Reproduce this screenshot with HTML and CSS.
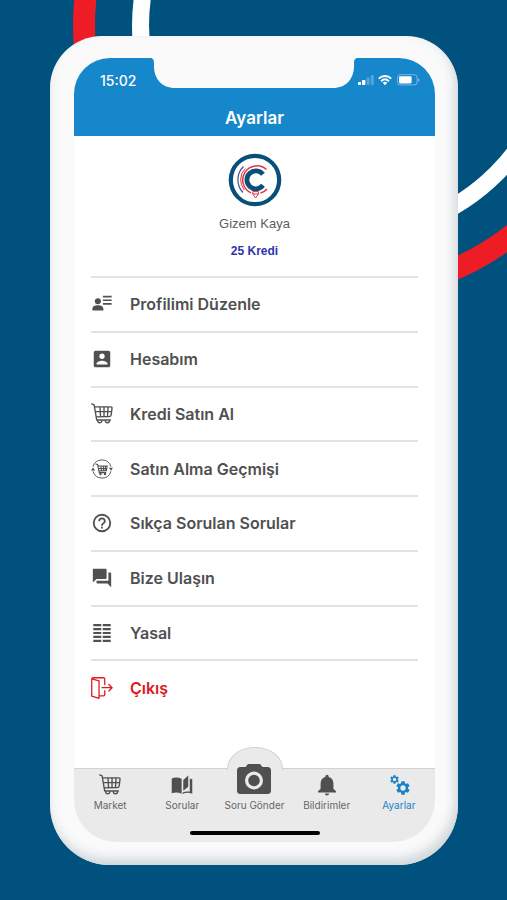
FILE: index.html
```html
<!DOCTYPE html>
<html lang="tr">
<head>
<meta charset="utf-8">
<meta name="viewport" content="width=device-width, initial-scale=1">
<title>Ayarlar</title>
<link rel="stylesheet" href="styles.css">
</head>
<body>
<svg class="rings" aria-hidden="true">
  <circle cx="349" cy="26" r="265" fill="none" stroke="#ee1c25" stroke-width="22"/>
  <circle cx="349" cy="26" r="208.5" fill="none" stroke="#fff" stroke-width="17"/>
</svg>

<svg class="defs" aria-hidden="true">
  <symbol id="cart" viewBox="0 0 24 24">
    <g fill="none" stroke="currentColor" stroke-width="1.5" stroke-linecap="round" stroke-linejoin="round">
      <path d="M.8 1l2.600 1 2.800 16.500h15M3.900 4.200h17.500q1.700 0 1.500 1.700l-.9 7.200q-.2 1.500-1.700 1.600L5.600 15.200M4.800 9.400h17.600M9.800 4.400l.6 10.400M14.200 4.400v10.400M18.600 4.400l-.6 10.200"/>
      <path d="M7.200 19.300a2.300 2.300 0 1 0 4.600 0M15.600 19.300a2.300 2.300 0 1 0 4.600 0"/>
    </g>
  </symbol>
  <symbol id="gear" viewBox="2 2 20 20">
    <path fill="currentColor" d="M19.14 12.94c.04-.3.06-.61.06-.94 0-.32-.02-.64-.07-.94l2.03-1.58c.18-.14.23-.41.12-.61l-1.92-3.32c-.12-.22-.37-.29-.59-.22l-2.39.96c-.5-.38-1.03-.7-1.62-.94l-.36-2.54c-.04-.24-.24-.41-.48-.41h-3.84c-.24 0-.43.17-.47.41l-.36 2.54c-.59.24-1.13.57-1.62.94l-2.39-.96c-.22-.08-.47 0-.59.22L2.74 8.870c-.12.21-.08.47.12.61l2.03 1.58c-.05.3-.09.63-.09.94s.02.64.07.94l-2.03 1.58c-.18.14-.23.41-.12.61l1.92 3.32c.12.22.37.29.59.22l2.39-.96c.5.38 1.03.7 1.62.94l.36 2.54c.05.24.24.41.48.41h3.84c.24 0 .44-.17.47-.41l.36-2.54c.59-.24 1.13-.56 1.62-.94l2.39.96c.22.08.47 0 .59-.22l1.92-3.32c.12-.22.07-.47-.12-.61l-2.01-1.58zM12 15.800a3.800 3.800 0 1 1 0-7.600 3.800 3.800 0 0 1 0 7.600z"/>
  </symbol>
</svg>

<main class="phone">
  <div class="screen">
    <header class="header">
      <svg class="notch" width="210" height="30" viewBox="0 0 210 30" aria-hidden="true">
        <path fill="#fafafb" d="M0 0C3 0 4 2 4 5v3c0 13 8 22 21 22h158c13 0 21-9 21-22V5c0-3 1-5 4-5z"/>
      </svg>
      <div class="status">
        <time class="clock">15:02</time>
        <svg width="64" height="14" viewBox="0 0 64 14" aria-hidden="true">
          <g fill="#fff">
            <rect x="1" y="9" width="3" height="3" rx=".7"/>
            <rect x="5" y="7" width="3.400" height="5" rx=".7"/>
            <rect x="9.600" y="4.500" width="3" height="7.500" rx=".7" opacity=".25"/>
            <rect x="13.800" y="2" width="3" height="10" rx=".7" opacity=".25"/>
            <path d="M28 12.200l-2.200-2.400a3.300 3.300 0 0 1 4.400 0z"/>
            <rect x="42" y="3.200" width="12.600" height="7.200" rx="1.300"/>
            <path d="M61.300 5v4c1.600-.6 1.600-3.400 0-4z" opacity=".5"/>
          </g>
          <g fill="none" stroke="#fff">
            <path stroke-width="1.900" d="M21.800 5.600c3.600-3.500 8.800-3.500 12.400 0M24 8.200c2.400-2.200 5.600-2.200 8 0"/>
            <rect x="40.500" y="1.700" width="19.500" height="10.200" rx="2.600" opacity=".4"/>
          </g>
        </svg>
      </div>
      <h1 class="title">Ayarlar</h1>
    </header>

    <section class="profile">
      <svg width="54" height="54" viewBox="0 0 54 54" role="img" aria-label="Logo">
        <circle cx="27" cy="27" r="24.200" fill="#fff" stroke="#08507a" stroke-width="4.200"/>
        <g fill="none" stroke-linecap="butt">
          <path stroke="#08507a" stroke-width="4.800" d="M35 21.300a9 9 0 1 0 0 11"/>
          <path stroke="#e4343f" stroke-width="1.500" d="M38.500 16.500a14.200 14.200 0 1 0-15.500 23.400M32.500 40q4-1 6.500-4"/>
          <path stroke="#e4343f" stroke-width="1" d="M17.300 15.500a16 16 0 0 0-1 21.500"/>
          <path stroke="#43508e" stroke-width="1.200" d="M15.500 13.500a18.500 18.500 0 0 0-.5 26"/>
          <path stroke="#e4343f" d="M24.800 38.600h5.600v2.600L27.600 45l-2.800-3.800zM24.800 41h5.600"/>
        </g>
      </svg>
      <p class="name">Gizem Kaya</p>
      <p class="credit">25 Kredi</p>
    </section>

    <nav class="menu" aria-label="Ayarlar">
      <a class="item" href="#profil">
        <svg class="icon" viewBox="0 0 24 24"><g fill="currentColor"><circle cx="7.500" cy="9" r="3.300"/><path d="M1.500 19v-1.600c0-3 2.600-4 6-4s6 1 6 4V19zM13 3h9.500v1.800H13zM13 7h9.500v1.800H13zM13 11h9.500v1.800H13z"/></g></svg>
        <span>Profilimi Düzenle</span>
      </a>
      <a class="item" href="#hesap">
        <svg class="icon" viewBox="0 0 24 24"><path fill="currentColor" d="M3 5v14a2 2 0 0 0 2 2h14c1.100 0 2-.9 2-2V5c0-1.100-.9-2-2-2H5a2 2 0 0 0-2 2zm12 4c0 1.660-1.340 3-3 3s-3-1.340-3-3 1.340-3 3-3 3 1.340 3 3zm-9 8c0-2 4-3.100 6-3.100s6 1.100 6 3.100v1H6z"/></svg>
        <span>Hesabım</span>
      </a>
      <a class="item" href="#kredi">
        <svg class="icon"><use href="#cart"/></svg>
        <span>Kredi Satın Al</span>
      </a>
      <a class="item" href="#gecmis">
        <svg class="icon" viewBox="0 0 24 24">
          <g fill="none" stroke="currentColor" stroke-width="1">
            <path d="M2.200 9.500a10.200 10.200 0 0 1 19.600 0M21.800 14.500a10.200 10.200 0 0 1-19.600 0"/>
            <path stroke-width="1.200" d="M5 6.500l2.200.6L9 16h7.500M7.700 8.800h10l-1 5-8 .4M8.500 11.400h8.800M10.800 8.800l.5 5M13.500 8.800v5M15.800 8.800l-.4 5"/>
          </g>
          <g fill="currentColor"><path d="M0 13.500h4.400L2.200 10.300zM19.600 10.500H24l-2.200 3.300z"/><circle cx="10.300" cy="17.400" r="1.300"/><circle cx="15.300" cy="17.400" r="1.300"/></g>
        </svg>
        <span>Satın Alma Geçmişi</span>
      </a>
      <a class="item" href="#sss">
        <svg class="icon" viewBox="0 0 24 24"><path fill="currentColor" d="M11 18h2v-2h-2zm1-16a10 10 0 1 0 0 20 10 10 0 0 0 0-20zm0 18a8 8 0 1 1 0-16 8 8 0 0 1 0 16zm0-14a4 4 0 0 0-4 4h2c0-1.100.9-2 2-2s2 .9 2 2c0 2-3 1.750-3 5h2c0-2.250 3-2.500 3-5a4 4 0 0 0-4-4z"/></svg>
        <span>Sıkça Sorulan Sorular</span>
      </a>
      <a class="item" href="#iletisim">
        <svg class="icon" viewBox="0 0 24 24"><path fill="currentColor" d="M21 6h-2v9H6v2c0 .55.45 1 1 1h11l4 4V7c0-.55-.45-1-1-1zm-4 6V3c0-.55-.45-1-1-1H3c-.55 0-1 .45-1 1v14l4-4h10c.55 0 1-.45 1-1z"/></svg>
        <span>Bize Ulaşın</span>
      </a>
      <a class="item" href="#yasal">
        <svg class="icon" viewBox="0 0 24 24"><path fill="none" stroke="currentColor" stroke-width="2.400" d="M2.500 3.500h8.700M2.500 7.700h8.700M2.500 12h8.700M2.500 16.300h8.700M2.500 20.500h8.700M12.800 3.500h8.700M12.800 7.700h8.700M12.800 12h8.700M12.800 16.300h8.700M12.800 20.500h8.700"/></svg>
        <span>Yasal</span>
      </a>
      <a class="item item-exit" href="#cikis">
        <svg class="icon" viewBox="0 0 24 24"><g fill="none" stroke="currentColor" stroke-width="1.400" stroke-linejoin="round" stroke-linecap="round"><path d="M.8 2l8 2.200v19l-8-2.400zM.8 2Q1 .8 2.500.8h11q1.500 0 1.500 1.500v6M15 15v4q0 1.500-1.500 1.500H9M12 11.700h11M19.500 8.200l3.500 3.500-3.500 3.500"/></g></svg>
        <span>Çıkış</span>
      </a>
    </nav>

    <footer class="bottom">
      <nav class="tabs" aria-label="Alt menü">
        <a class="tab" href="#market">
          <svg class="tab-icon"><use href="#cart"/></svg>
          <span>Market</span>
        </a>
        <a class="tab" href="#sorular">
          <svg class="tab-icon" viewBox="0 0 24 24"><path fill="currentColor" d="M.8 5C4 3.300 8 3.500 11.600 5.300v16.200c-3.600-1.700-7.300-1.900-10.800-.4zM18.800 1.500v12.300l-5.400 4.600V6.600zM20.500 4.800l2.700.8v16c-3.800-1.500-7.300-1.400-10.500.2v-1.600c2.800-1.200 5-1.300 7.800-.8z"/></svg>
          <span>Sorular</span>
        </a>
        <a class="tab tab-camera" href="#gonder">
          <svg class="camera" width="36" height="34" viewBox="0 0 36 34"><path fill="currentColor" fill-rule="evenodd" d="M12 2h12l2.500 3h5Q35 5 35 8.500v20Q35 32 31.500 32h-27Q1 32 1 28.500v-20Q1 5 4.500 5h5zM18 9.500a9 9 0 1 0 0 18 9 9 0 0 0 0-18zm0 3.200a5.800 5.800 0 1 1 0 11.600 5.800 5.800 0 0 1 0-11.600z"/></svg>
          <span>Soru Gönder</span>
        </a>
        <a class="tab" href="#bildirimler">
          <svg class="tab-icon" viewBox="0 0 24 24"><path fill="currentColor" d="M12 23.500c1.300 0 2.300-1 2.300-2.200H9.700c0 1.200 1 2.200 2.300 2.200zm7-7.500v-5.500c0-3.600-1.900-6.300-5.200-7.100v-.9a1.800 1.800 0 0 0-3.600 0v.9C6.900 4.200 5 6.900 5 10.500V16l-2.800 2.800v1.400h19.600v-1.400z"/></svg>
          <span>Bildirimler</span>
        </a>
        <a class="tab tab-active" href="#ayarlar" aria-current="page">
          <svg class="tab-icon" viewBox="0 0 22 22"><use href="#gear" x="2" y="1" width="9" height="9"/><use href="#gear" x="8" y="7" width="14" height="14"/></svg>
          <span>Ayarlar</span>
        </a>
      </nav>
      <div class="home-bar"></div>
    </footer>
  </div>
</main>
</body>
</html>
```

FILE: styles.css
```css
* {
  box-sizing: border-box;
}

body {
  margin: 0;
  min-height: 100vh;
  padding: 36px 49px 35px 50px;
  display: flex;
  position: relative;
  background: #00517d;
  font-family: Inter, "Liberation Sans", sans-serif;
  color: #505050;
}

.rings {
  position: absolute;
  top: 0;
  left: 0;
  width: 100%;
  height: 320px;
}

.defs {
  position: absolute;
  width: 0;
  height: 0;
}

a {
  color: inherit;
  text-decoration: none;
}

.phone {
  position: relative;
  flex: 1;
  display: flex;
  padding: 22px 23px 23px 24px;
  border-radius: 52px 52px 60px 60px;
  background: #fafafb;
  box-shadow: inset -3px -6px 12px #cdd4d8;
}

.screen {
  flex: 1;
  display: flex;
  flex-direction: column;
  overflow: hidden;
  border-radius: 36px 36px 42px 42px;
  background: #fff;
}

.header {
  position: relative;
  height: 78px;
  display: flex;
  flex-direction: column;
  justify-content: space-between;
  padding: 14px 14px 7px 26px;
  background: #1787cb;
  color: #fff;
}

.notch {
  position: absolute;
  top: 0;
  left: 50%;
  margin-left: -105px;
}

.status {
  display: flex;
  justify-content: space-between;
  align-items: center;
  height: 16px;
}

.clock {
  font-size: 14px;
  font-weight: 500;
}

.title {
  margin: 0 12px 0 0;
  font-size: 17px;
  line-height: 22px;
  font-weight: 600;
  text-align: center;
}

.profile {
  display: flex;
  flex-direction: column;
  align-items: center;
  padding: 17px 0;
}

.name,
.credit {
  margin: 0;
  font-family: "Liberation Sans", sans-serif;
  line-height: 16px;
}

.name {
  margin-top: 9px;
  font-size: 13px;
  color: #5c5c5f;
}

.credit {
  margin-top: 11px;
  font-size: 12px;
  font-weight: 700;
  color: #2e35b0;
}

.menu {
  flex: 1;
  display: grid;
  grid-auto-rows: 1fr;
  padding: 0 17px;
  margin-bottom: 54px;
}

.item {
  display: flex;
  align-items: center;
  gap: 17px;
  border-top: 2px solid #e2e2e2;
  font-size: 16px;
  font-weight: 600;
}

.icon {
  width: 22px;
  height: 22px;
}

.item-exit {
  color: #dd1a1f;
}

.bottom {
  display: flex;
  flex-direction: column;
  align-items: center;
  gap: 20px;
  padding-bottom: 7px;
  border-top: 1px solid #d2d2d2;
  background: #eaeaea;
}

.tabs {
  align-self: stretch;
  display: grid;
  grid-template-columns: repeat(5, 1fr);
}

.tab {
  position: relative;
  display: flex;
  flex-direction: column;
  align-items: center;
  justify-content: flex-end;
  gap: 3px;
  height: 42px;
  font-size: 10px;
  line-height: 12px;
  white-space: nowrap;
  color: #666;
}

.tab-icon {
  width: 22px;
  height: 22px;
  color: #505050;
}

.tab-camera::before {
  content: "";
  position: absolute;
  left: 50%;
  top: -22px;
  width: 54px;
  height: 22px;
  margin-left: -27px;
  border: 1px solid #d2d2d2;
  border-bottom: 0;
  border-radius: 27px 27px 0 0 / 22px 22px 0 0;
  background: #eaeaea;
}

.camera {
  position: relative;
  flex: none;
  color: #505050;
}

.tab-active,
.tab-active .tab-icon {
  color: #1a82c6;
}

.home-bar {
  width: 130px;
  height: 4px;
  border-radius: 2px;
  background: #000;
}
```
